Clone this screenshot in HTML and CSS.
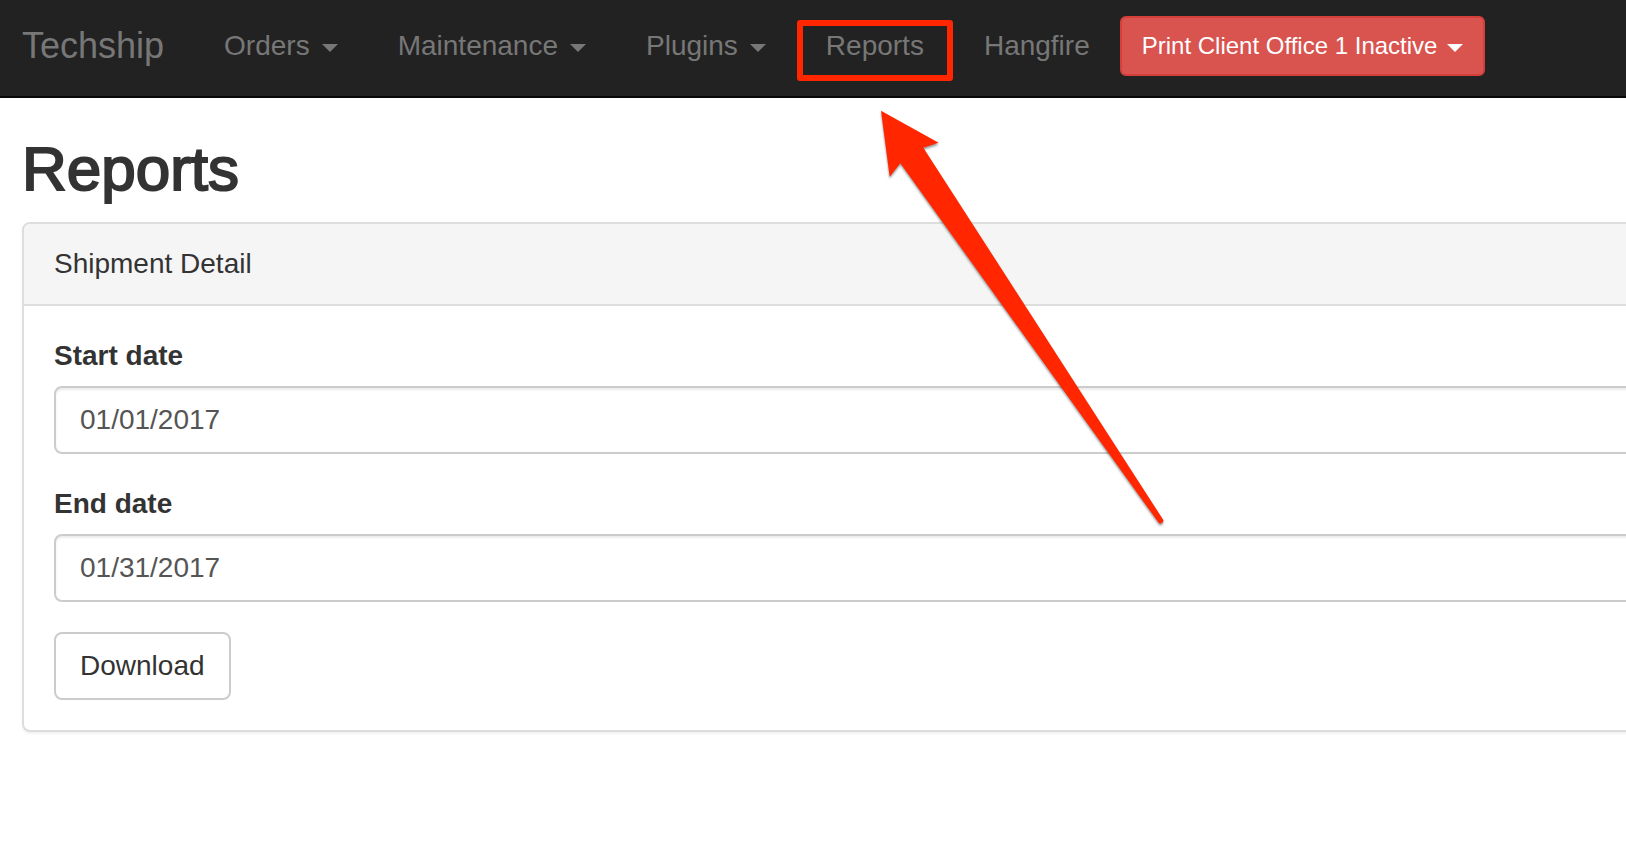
FILE: index.html
```html
<!DOCTYPE html>
<html lang="en">
<head>
  <meta charset="UTF-8">
  <meta name="viewport" content="width=device-width, initial-scale=1.0">
  <title>Reports - Techship</title>
  <link rel="stylesheet" href="styles.css">
</head>
<body>

<!-- Navbar -->
<nav class="navbar">
  <a class="navbar-brand" href="#">Techship</a>
  <ul class="navbar-nav">
    <li><a href="#">Orders <span class="caret"></span></a></li>
    <li><a href="#">Maintenance <span class="caret"></span></a></li>
    <li><a href="#">Plugins <span class="caret"></span></a></li>
    <li class="highlighted">
      <a href="#">Reports</a>
      <svg class="arrow" width="320" height="430" viewBox="0 0 960 1290" aria-hidden="true">
        <path d="M63 32 L236 128 L190 143 L908 1257 A8 8 0 0 1 895 1267 L121 190 L89 230 Z"/>
      </svg>
    </li>
    <li><a href="#">Hangfire</a></li>
  </ul>
  <button type="button" class="btn btn-danger">Print Client Office 1 Inactive <span class="caret"></span></button>
</nav>

<main class="container">
  <h2>Reports</h2>

  <!-- Shipment Detail -->
  <section class="panel">
    <div class="panel-heading">Shipment Detail</div>
    <form class="panel-body">
      <div class="form-group">
        <label for="startDate">Start date</label>
        <input type="text" id="startDate" class="form-control" value="01/01/2017">
      </div>
      <div class="form-group">
        <label for="endDate">End date</label>
        <input type="text" id="endDate" class="form-control" value="01/31/2017">
      </div>
      <button type="button" class="btn btn-default">Download</button>
    </form>
  </section>
</main>

</body>
</html>
```
FILE: styles.css
```css
* {
    margin: 0;
    padding: 0;
    box-sizing: border-box;
}

body {
    font-family: "Helvetica Neue", Helvetica, "Liberation Sans", Arial, sans-serif;
    font-size: 28px;
    line-height: 40px;
    color: #333;
    background-color: #fff;
    overflow-x: hidden;
}

/* Navbar */
.navbar {
    display: flex;
    align-items: center;
    padding: 0 22px 4px;
    background-color: #222;
    border-bottom: 2px solid #080808;
}

.navbar a {
    color: #777;
    text-decoration: none;
    white-space: nowrap;
}

.navbar-brand {
    padding-right: 30px;
    font-size: 36px;
}

.navbar-nav {
    display: flex;
    list-style: none;
}

.navbar-nav a {
    display: flex;
    align-items: center;
    gap: 12px;
    padding: 26px 30px;
}

.caret {
    margin-top: 4px;
    border-top: 8px solid;
    border-left: 8px solid transparent;
    border-right: 8px solid transparent;
}

/* Red frame and arrow around the Reports link */
.highlighted {
    position: relative;
}

.highlighted::after {
    content: "";
    position: absolute;
    top: 20px;
    right: 1px;
    bottom: 11px;
    left: 1px;
    border: 6px solid #ff2600;
    border-radius: 3px;
    pointer-events: none;
}

.arrow {
    position: absolute;
    top: 100px;
    left: 64px;
    z-index: 1;
    fill: #ff2600;
    filter: drop-shadow(0 2px 1px rgba(0, 0, 0, 0.4));
    pointer-events: none;
}

/* Buttons */
.btn {
    border: 2px solid transparent;
    font-family: inherit;
    white-space: nowrap;
    cursor: pointer;
}

.btn-danger {
    display: flex;
    align-items: center;
    gap: 10px;
    padding: 10px 20px;
    border-color: #d43f3a;
    border-radius: 6px;
    font-size: 24px;
    line-height: 36px;
    color: #fff;
    background-color: #d9534f;
}

.btn-default {
    padding: 12px 24px;
    border-color: #ccc;
    border-radius: 8px;
    font-size: 28px;
    line-height: 40px;
    color: #333;
    background-color: #fff;
}

/* The content runs past the right edge of the window */
.container {
    margin-right: -60px;
    padding: 38px 0 40px 22px;
}

h2 {
    margin-bottom: 20px;
    font-size: 62px;
    font-weight: 400;
    line-height: 66px;
    -webkit-text-stroke: 2px #333;
}

.panel {
    border: 2px solid #ddd;
    border-radius: 8px;
    background-color: #fff;
    box-shadow: 0 2px 2px rgba(0, 0, 0, 0.05);
}

.panel-heading {
    padding: 20px 30px;
    border-bottom: 2px solid #ddd;
    border-radius: 6px 6px 0 0;
    background-color: #f5f5f5;
}

.panel-body {
    padding: 30px;
}

.form-group {
    margin-bottom: 30px;
}

.form-group label {
    display: block;
    margin-bottom: 10px;
    font-weight: 700;
}

.form-control {
    display: block;
    width: 100%;
    padding: 12px 24px;
    border: 2px solid #ccc;
    border-radius: 8px;
    font-family: inherit;
    font-size: 28px;
    line-height: 40px;
    color: #555;
    background-color: #fff;
    box-shadow: inset 0 2px 2px rgba(0, 0, 0, 0.075);
}
```
